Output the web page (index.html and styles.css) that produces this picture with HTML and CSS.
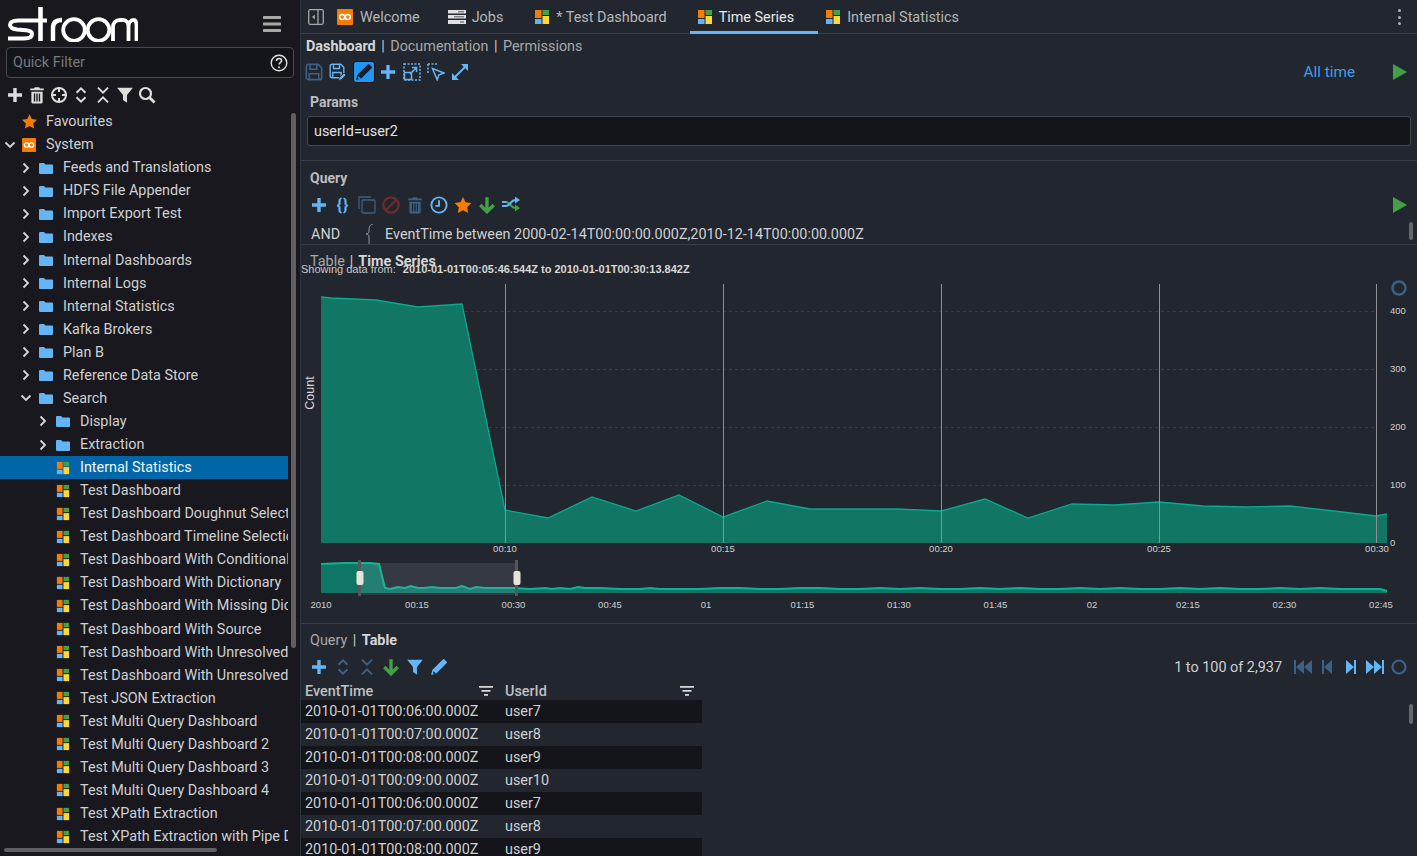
FILE: index.html
```html
<!DOCTYPE html>
<html lang="en">
<head>
<meta charset="utf-8">
<title>Stroom</title>
<link rel="stylesheet" href="styles.css">
</head>
<body>
<svg class="defs" aria-hidden="true">
  <symbol id="dash" viewBox="-1 -1 16 16">
    <rect x="0" y="0" width="6.500" height="8" fill="#f57c00"/><rect x="7.500" y="0" width="6.500" height="5" fill="#43a047"/>
    <rect x="0" y="9" width="6.500" height="5" fill="#64b5f6"/><rect x="7.500" y="6" width="6.500" height="8" fill="#fdd835"/>
  </symbol>
  <symbol id="folder" viewBox="0 0 14 14">
    <path d="M0 3a1 1 0 0 1 1-1h4l1.500 1.500H13a1 1 0 0 1 1 1V12a1 1 0 0 1-1 1H1a1 1 0 0 1-1-1z" fill="#64b5f6"/>
  </symbol>
  <symbol id="chev-r" viewBox="0 0 12 12">
    <path d="M3.500 1.500 8 6l-4.500 4.500" fill="none" stroke="#d8d8d8" stroke-width="1.800"/>
  </symbol>
  <symbol id="chev-d" viewBox="0 0 12 12">
    <path d="M1.500 3.500 6 8l4.500-4.500" fill="none" stroke="#d8d8d8" stroke-width="1.800"/>
  </symbol>
  <symbol id="oo" viewBox="0 0 16 16">
    <rect width="16" height="16" rx="1" fill="#f57c00"/>
    <circle cx="5.200" cy="8" r="2.500" fill="none" stroke="#fff" stroke-width="1.500"/><circle cx="10.800" cy="8" r="2.500" fill="none" stroke="#fff" stroke-width="1.500"/>
  </symbol>
  <symbol id="plus" viewBox="-1 -1 18 18">
    <path d="M6.300 1h3.400v5.300H15v3.400H9.700V15H6.300V9.700H1V6.300h5.300z" fill="currentColor"/>
  </symbol>
  <symbol id="trash" viewBox="0 0 16 16">
    <path d="M6 1h4l.6 1.200H14v1.600H2V2.200h3.400zM3 5h10v9.500a1 1 0 0 1-1 1H4a1 1 0 0 1-1-1zm2.200 1.600v7.200h1.200V6.600zm2.200 0v7.200h1.200V6.600zm2.200 0v7.200h1.200V6.600z" fill="currentColor" fill-rule="evenodd"/>
  </symbol>
  <symbol id="expand" viewBox="0 0 16 16">
    <path d="M4 6l4-4 4 4M4 10l4 4 4-4" fill="none" stroke="currentColor" stroke-width="1.700"/>
  </symbol>
  <symbol id="collapse" viewBox="0 0 16 16">
    <path d="M3.500 1.500 8 6l4.500-4.500M3.500 14.500 8 10l4.500 4.500" fill="none" stroke="currentColor" stroke-width="1.700"/>
  </symbol>
  <symbol id="filter" viewBox="0 0 16 16">
    <path d="M1 1.500h14L9.800 8v6.800L6.200 12.500V8z" fill="currentColor"/>
  </symbol>
  <symbol id="sortlines" viewBox="0 0 14 10">
    <path d="M0 0h14v1.700H0zM2.500 4h9v1.700h-9zM5 8h4v1.700H5z" fill="#d8d8d8"/>
  </symbol>
  <symbol id="pencil" viewBox="0 0 16 16">
    <path d="M11.400 1.300a1 1 0 0 1 1.400 0l1.900 1.900a1 1 0 0 1 0 1.400L5.300 14 1 15l1-4.300zM3.200 11.700l-.6 1.700 1 1 1.700-.6z" fill="currentColor" fill-rule="evenodd"/>
  </symbol>
  <symbol id="save" viewBox="0 0 16 16">
    <path d="M1.200 3a1.800 1.800 0 0 1 1.800-1.800h8.800l3 3V13a1.800 1.800 0 0 1-1.800 1.800H3A1.800 1.800 0 0 1 1.200 13zM4.500 1.500v4h6v-4M3.800 14.500v-5h8.400v5" fill="none" stroke="currentColor" stroke-width="1.400"/>
  </symbol>
</svg>

<div class="app">
  <aside class="sidebar">
    <header class="brand">
      <svg class="logo" viewBox="8 7 130 35" role="img" aria-label="stroom">
        <g fill="none" stroke="#fff" stroke-width="4">
          <path d="M47 20.500H18c-5 0-8 1.500-8 4.500 0 3 3 4 7 4.500l9 .8c4 .4 6 1.200 6 3.700 0 3-3 4.500-8 4.500H8" stroke-width="4"/>
          <path d="M40.500 7v34" stroke-width="4.600"/>
          <path d="M53 41V28c0-5 3-8 9-8" stroke-width="4.400"/>
          <circle cx="74" cy="30" r="10.800" stroke-width="3.800"/><circle cx="98.500" cy="30" r="10.800" stroke-width="3.800"/>
          <path d="M113 41V27c0-4 2.500-7 7-7h3c3.500 0 5.500 3 5.500 7v14M128.500 27c0-4 2-7 5-7 2 0 3 2.500 3 6v15" stroke-width="3.800"/>
        </g>
      </svg>
      <svg class="menu" viewBox="0 0 18 16" aria-hidden="true"><path d="M1 1.500h16M1 8h16M1 14.500h16" stroke="#a8a8a8" stroke-width="3" stroke-linecap="round"/></svg>
    </header>
    <div class="quick-filter">
      <span>Quick Filter</span>
      <svg viewBox="0 0 18 18" aria-hidden="true"><circle cx="9" cy="9" r="7.800" fill="none" stroke="#e0e0e0" stroke-width="1.400"/><path d="M6.500 7c0-1.500 1.100-2.500 2.600-2.500s2.500 1 2.500 2.300c0 1.800-2.500 1.900-2.500 3.700" fill="none" stroke="#e0e0e0" stroke-width="1.500"/><circle cx="9.100" cy="13.200" r="1" fill="#e0e0e0"/></svg>
    </div>
    <div class="side-tools">
      <svg class="t16"><use href="#plus"/></svg>
      <svg class="t16"><use href="#trash"/></svg>
      <svg class="t18" viewBox="0 0 18 18"><circle cx="9" cy="9" r="7" fill="none" stroke="currentColor" stroke-width="2"/><path d="M9 1v5M9 12v5M1 9h5M12 9h5" stroke="currentColor" stroke-width="2"/></svg>
      <svg class="t16"><use href="#expand"/></svg>
      <svg class="t16"><use href="#collapse"/></svg>
      <svg class="t16"><use href="#filter"/></svg>
      <svg class="t18" viewBox="0 0 18 18"><circle cx="7.500" cy="7.500" r="5.500" fill="none" stroke="currentColor" stroke-width="2.200"/><path d="M11.500 11.500 16.500 16.500" stroke="currentColor" stroke-width="2.800"/></svg>
    </div>
    <div class="tree-wrap">
      <ul class="tree">
        <li class="row l0"><i class="arrow"></i><svg class="ico star" viewBox="0.500 0.800 15 14.400"><path d="M8 .8l2.300 4.800 5.200.7-3.800 3.600.9 5.200L8 12.600l-4.600 2.500.9-5.200L.5 6.300l5.200-.7z" fill="#f57c00"/></svg><span>Favourites</span></li>
        <li class="row l0"><svg class="arrow"><use href="#chev-d"/></svg><svg class="ico"><use href="#oo"/></svg><span>System</span></li>
        <li class="row l1"><svg class="arrow"><use href="#chev-r"/></svg><svg class="ico"><use href="#folder"/></svg><span>Feeds and Translations</span></li>
        <li class="row l1"><svg class="arrow"><use href="#chev-r"/></svg><svg class="ico"><use href="#folder"/></svg><span>HDFS File Appender</span></li>
        <li class="row l1"><svg class="arrow"><use href="#chev-r"/></svg><svg class="ico"><use href="#folder"/></svg><span>Import Export Test</span></li>
        <li class="row l1"><svg class="arrow"><use href="#chev-r"/></svg><svg class="ico"><use href="#folder"/></svg><span>Indexes</span></li>
        <li class="row l1"><svg class="arrow"><use href="#chev-r"/></svg><svg class="ico"><use href="#folder"/></svg><span>Internal Dashboards</span></li>
        <li class="row l1"><svg class="arrow"><use href="#chev-r"/></svg><svg class="ico"><use href="#folder"/></svg><span>Internal Logs</span></li>
        <li class="row l1"><svg class="arrow"><use href="#chev-r"/></svg><svg class="ico"><use href="#folder"/></svg><span>Internal Statistics</span></li>
        <li class="row l1"><svg class="arrow"><use href="#chev-r"/></svg><svg class="ico"><use href="#folder"/></svg><span>Kafka Brokers</span></li>
        <li class="row l1"><svg class="arrow"><use href="#chev-r"/></svg><svg class="ico"><use href="#folder"/></svg><span>Plan B</span></li>
        <li class="row l1"><svg class="arrow"><use href="#chev-r"/></svg><svg class="ico"><use href="#folder"/></svg><span>Reference Data Store</span></li>
        <li class="row l1"><svg class="arrow"><use href="#chev-d"/></svg><svg class="ico"><use href="#folder"/></svg><span>Search</span></li>
        <li class="row l2"><svg class="arrow"><use href="#chev-r"/></svg><svg class="ico"><use href="#folder"/></svg><span>Display</span></li>
        <li class="row l2"><svg class="arrow"><use href="#chev-r"/></svg><svg class="ico"><use href="#folder"/></svg><span>Extraction</span></li>
        <li class="row l2 selected"><i class="arrow"></i><svg class="ico"><use href="#dash"/></svg><span>Internal Statistics</span></li>
        <li class="row l2"><i class="arrow"></i><svg class="ico"><use href="#dash"/></svg><span>Test Dashboard</span></li>
        <li class="row l2"><i class="arrow"></i><svg class="ico"><use href="#dash"/></svg><span>Test Dashboard Doughnut Selection</span></li>
        <li class="row l2"><i class="arrow"></i><svg class="ico"><use href="#dash"/></svg><span>Test Dashboard Timeline Selection</span></li>
        <li class="row l2"><i class="arrow"></i><svg class="ico"><use href="#dash"/></svg><span>Test Dashboard With Conditional</span></li>
        <li class="row l2"><i class="arrow"></i><svg class="ico"><use href="#dash"/></svg><span>Test Dashboard With Dictionary</span></li>
        <li class="row l2"><i class="arrow"></i><svg class="ico"><use href="#dash"/></svg><span>Test Dashboard With Missing Dictionary</span></li>
        <li class="row l2"><i class="arrow"></i><svg class="ico"><use href="#dash"/></svg><span>Test Dashboard With Source</span></li>
        <li class="row l2"><i class="arrow"></i><svg class="ico"><use href="#dash"/></svg><span>Test Dashboard With Unresolved</span></li>
        <li class="row l2"><i class="arrow"></i><svg class="ico"><use href="#dash"/></svg><span>Test Dashboard With Unresolved</span></li>
        <li class="row l2"><i class="arrow"></i><svg class="ico"><use href="#dash"/></svg><span>Test JSON Extraction</span></li>
        <li class="row l2"><i class="arrow"></i><svg class="ico"><use href="#dash"/></svg><span>Test Multi Query Dashboard</span></li>
        <li class="row l2"><i class="arrow"></i><svg class="ico"><use href="#dash"/></svg><span>Test Multi Query Dashboard 2</span></li>
        <li class="row l2"><i class="arrow"></i><svg class="ico"><use href="#dash"/></svg><span>Test Multi Query Dashboard 3</span></li>
        <li class="row l2"><i class="arrow"></i><svg class="ico"><use href="#dash"/></svg><span>Test Multi Query Dashboard 4</span></li>
        <li class="row l2"><i class="arrow"></i><svg class="ico"><use href="#dash"/></svg><span>Test XPath Extraction</span></li>
        <li class="row l2"><i class="arrow"></i><svg class="ico"><use href="#dash"/></svg><span>Test XPath Extraction with Pipe Default</span></li>
      </ul>
      <div class="vscroll"></div>
      <div class="hscroll"></div>
    </div>
  </aside>

  <main class="main">
    <nav class="tabs">
      <svg class="panel-toggle" viewBox="0 0 16 16" aria-hidden="true"><rect x=".7" y=".7" width="14.600" height="14.600" rx="1.500" fill="none" stroke="#a8a8a8" stroke-width="1.300"/><path d="M10 1v14" stroke="#a8a8a8" stroke-width="1.300"/><path d="M6.800 5.500v5L4 8z" fill="#a8a8a8"/></svg>
      <div class="tab welcome"><svg class="ico"><use href="#oo"/></svg><span>Welcome</span></div>
      <div class="tab jobs-tab"><svg class="ico jobs" viewBox="0 0 18 14"><path d="M0 0h18v3.600H0zM0 5h18v3.600H0zM0 10h18v4H0z" fill="#e0e0e0"/><path d="M10 1.800h6M6 6.800h10M12 12h4" stroke="#555" stroke-width="1"/></svg><span>Jobs</span></div>
      <div class="tab"><svg class="ico"><use href="#dash"/></svg><span>* Test Dashboard</span></div>
      <div class="tab active"><svg class="ico"><use href="#dash"/></svg><span>Time Series</span></div>
      <div class="tab"><svg class="ico"><use href="#dash"/></svg><span>Internal Statistics</span></div>
      <div class="tabs-more"><b></b><b></b><b></b></div>
    </nav>

    <section class="dash-head">
      <div class="crumbs"><b>Dashboard</b><em>|</em><span>Documentation</span><em>|</em><span>Permissions</span></div>
      <div class="tool-row">
        <svg class="t18 dim"><use href="#save"/></svg>
        <svg class="t18 blue" viewBox="0 0 18 18"><use href="#save" width="16" height="16"/><path d="M10 15l5-5 2 2-5 5-2.500.5z" fill="currentColor" stroke="#22262e" stroke-width=".8"/></svg>
        <span class="btn-on"><svg class="t16"><use href="#pencil"/></svg></span>
        <svg class="t16 blue"><use href="#plus"/></svg>
        <svg class="t18 blue" viewBox="0 0 18 18"><path d="M1 1h16v16H1z" fill="none" stroke="currentColor" stroke-width="1.600" stroke-dasharray="2 1.500"/><rect x="1.500" y="9.500" width="7" height="7" fill="#22262e" stroke="currentColor" stroke-width="1.500"/><path d="M7 11l6-6M9 4.500h4.500V9" fill="none" stroke="currentColor" stroke-width="1.500"/></svg>
        <svg class="t18 blue" viewBox="0 0 18 18"><path d="M1 1h9M1 1v9" fill="none" stroke="currentColor" stroke-width="1.600" stroke-dasharray="2 1.500"/><path d="M5.500 5.500 17 10l-5 1.800-1.800 5z" fill="none" stroke="currentColor" stroke-width="1.500"/></svg>
        <svg class="t18 blue" viewBox="0 0 18 18"><path d="M4 14 14 4" stroke="currentColor" stroke-width="2"/><path d="M10 1h7v7zM8 17H1v-7z" fill="currentColor"/></svg>
        <span class="spacer"></span>
        <span class="all-time">All time</span>
        <svg class="play" viewBox="0 0 14 16"><path d="M0 0l14 8-14 8z" fill="#43a047"/></svg>
      </div>
    </section>

    <section class="params">
      <h3>Params</h3>
      <div class="param-input">userId=user2</div>
    </section>

    <section class="query">
      <h3>Query</h3>
      <div class="tool-row q-tools">
        <svg class="t16 blue"><use href="#plus"/></svg>
        <span class="braces">{}</span>
        <svg class="t18 dim" viewBox="0 0 18 18"><path d="M1 13V1h12" fill="none" stroke="currentColor" stroke-width="1.300"/><rect x="4" y="4" width="13" height="13" rx="1" fill="none" stroke="currentColor" stroke-width="1.300"/></svg>
        <svg class="t16 red" viewBox="0 0 16 16"><circle cx="8" cy="8" r="6.800" fill="none" stroke="currentColor" stroke-width="2"/><path d="M3.500 12.500l9-9" stroke="currentColor" stroke-width="2"/></svg>
        <svg class="t16 dim"><use href="#trash"/></svg>
        <svg class="t16 blue" viewBox="0 0 16 16"><circle cx="8" cy="8" r="6.800" fill="none" stroke="currentColor" stroke-width="1.700"/><path d="M8 3.800V8.800H4.800" fill="none" stroke="currentColor" stroke-width="1.700"/></svg>
        <svg class="t18" viewBox="0 0 16 16"><path d="M8 .8l2.300 4.800 5.200.7-3.800 3.600.9 5.200L8 12.600l-4.600 2.500.9-5.200L.5 6.300l5.200-.7z" fill="#f57c00"/></svg>
        <svg class="t16" viewBox="0 0 16 16"><path d="M8 1v13M2 8l6 6 6-6" fill="none" stroke="#43a047" stroke-width="3"/></svg>
        <svg class="t18" viewBox="0 0 18 18"><path d="M4 6c4 0 5 6 9 6h1" fill="none" stroke="#43a047" stroke-width="2"/><path d="M4 10c4 0 5-6 9-6h1" fill="none" stroke="#64b5f6" stroke-width="2"/><path d="M0 6h4.500M0 10h4.500" stroke="#64b5f6" stroke-width="2"/><path d="M13 .5 18 4l-5 3.500z" fill="#64b5f6"/><path d="M13 8.500 18 12l-5 3.500z" fill="#43a047"/></svg>
        <span class="spacer"></span>
        <svg class="play" viewBox="0 0 14 16"><path d="M0 0l14 8-14 8z" fill="#43a047"/></svg>
      </div>
      <div class="expr"><span class="op">AND</span><svg class="brace" viewBox="0 0 10 20"><path d="M8 0C4 1 4 4 4 7c0 2-1 3-3 3 2 0 3 1 3 3v7" fill="none" stroke="#999" stroke-width="1"/></svg><span>EventTime between 2000-02-14T00:00:00.000Z,2010-12-14T00:00:00.000Z</span></div>
      <div class="scroll-nub q-nub"></div>
    </section>

    <section class="chart-panel">
      <div class="crumbs chart-tabs"><span>Table</span><em>|</em><b>Time Series</b></div>
      <div class="chart-caption">Showing data from: <b>2010-01-01T00:05:46.544Z to 2010-01-01T00:30:13.842Z</b></div>
      <svg class="chart" viewBox="301 245 1116 378" aria-label="Count over time">
        <g class="grid"><path d="M321 311.500H1376M321 369.500H1376M321 427.500H1376M321 485.500H1376"/></g>
        <path class="area" d="M321 297L331 298 376 300 418 307 462 304 505 510 548 518 592 497 636 511 679 495 723 517 767 501 810 509 854 509 897 509 941 511 985 499 1028 518 1072 504 1115 505 1159 502 1203 506 1246 507 1290 506 1334 511 1376 516 1387 514V543H321Z"/>
        <path class="area-line" d="M321 297L331 298 376 300 418 307 462 304 505 510 548 518 592 497 636 511 679 495 723 517 767 501 810 509 854 509 897 509 941 511 985 499 1028 518 1072 504 1115 505 1159 502 1203 506 1246 507 1290 506 1334 511 1376 516 1387 514"/>
        <path class="vlines" d="M505.500 284V543M723.500 284V543M941.500 284V543M1159.500 284V543M1376.500 284V543"/>
        <g class="tick" text-anchor="middle">
          <text x="505" y="552">00:10</text><text x="723" y="552">00:15</text><text x="941" y="552">00:20</text><text x="1159" y="552">00:25</text><text x="1377" y="552">00:30</text>
        </g>
        <g class="tick">
          <text x="1390" y="314">400</text><text x="1390" y="372">300</text><text x="1390" y="430">200</text><text x="1390" y="488">100</text><text x="1390" y="546">0</text>
        </g>
        <text class="y-title" transform="translate(314 393) rotate(-90)" text-anchor="middle">Count</text>
        <circle class="ring" cx="1399" cy="288" r="6.500"/>
        <path class="area mini" d="M321 564L345 563 370 563 379 564 385 588 390 589 398 587 405 588 411 586 418 588 424 588 432 587 440 588 448 588 456 588 462 586 470 589 476 587 485 588 500 588 514 588 530 589 545 588 552 589 560 588 570 589 578 587 585 588 600 588 620 589 640 589 650 588 660 589 680 589 700 589 720 588 740 588 760 589 780 589 800 588 820 588 840 589 860 589 880 588 900 589 920 588 940 589 960 589 980 588 1000 589 1020 588 1040 589 1060 589 1080 588 1100 589 1120 588 1140 589 1160 589 1180 588 1200 589 1220 588 1240 589 1260 589 1280 588 1300 589 1320 588 1340 589 1380 589 1387 591V593H321Z"/>
        <path class="area-line mini-line" d="M321 564L345 563 370 563 379 564 385 588 390 589 398 587 405 588 411 586 418 588 424 588 432 587 440 588 448 588 456 588 462 586 470 589 476 587 485 588 500 588 514 588 530 589 545 588 552 589 560 588 570 589 578 587 585 588 600 588 620 589 640 589 650 588 660 589 680 589 700 589 720 588 740 588 760 589 780 589 800 588 820 588 840 589 860 589 880 588 900 589 920 588 940 589 960 589 980 588 1000 589 1020 588 1040 589 1060 589 1080 588 1100 589 1120 588 1140 589 1160 589 1180 588 1200 589 1220 588 1240 589 1260 589 1280 588 1300 589 1320 588 1340 589 1380 589 1387 591"/>
        <rect class="brush" x="360" y="563" width="157" height="32"/>
        <g class="handle"><rect class="stem" x="358" y="560" width="3" height="36"/><rect class="grip" x="356.500" y="571" width="7" height="14" rx="2"/></g>
        <g class="handle"><rect class="stem" x="515" y="560" width="3" height="36"/><rect class="grip" x="513.500" y="571" width="7" height="14" rx="2"/></g>
        <g class="tick" text-anchor="middle">
          <text x="321" y="608">2010</text><text x="417" y="608">00:15</text><text x="513.500" y="608">00:30</text><text x="610" y="608">00:45</text><text x="706" y="608">01</text><text x="802.500" y="608">01:15</text><text x="899" y="608">01:30</text><text x="995.500" y="608">01:45</text><text x="1092" y="608">02</text><text x="1188" y="608">02:15</text><text x="1284.500" y="608">02:30</text><text x="1381" y="608">02:45</text>
        </g>
      </svg>
    </section>

    <section class="table-panel">
      <div class="crumbs table-tabs"><span>Query</span><em>|</em><b>Table</b></div>
      <div class="tool-row t-tools">
        <svg class="t16 blue"><use href="#plus"/></svg>
        <svg class="t16 dim"><use href="#expand"/></svg>
        <svg class="t16 dim"><use href="#collapse"/></svg>
        <svg class="t16" viewBox="0 0 16 16"><path d="M8 1v13M2 8l6 6 6-6" fill="none" stroke="#43a047" stroke-width="3"/></svg>
        <svg class="t16 blue"><use href="#filter"/></svg>
        <svg class="t16 blue"><use href="#pencil"/></svg>
        <span class="spacer"></span>
        <span class="count">1 to 100 of 2,937</span>
        <span class="pager">
          <svg class="pg dim" viewBox="0 0 18 16"><path d="M0 1h2v14H0zM10 1v14L2 8zM18 1v14l-8-7z" fill="currentColor"/></svg>
          <svg class="pg-s dim" viewBox="0 0 10 16"><path d="M0 1h2v14H0zM10 1v14L2 8z" fill="currentColor"/></svg>
          <svg class="pg-s next blue" viewBox="0 0 10 16"><path d="M8 1h2v14H8zM0 1v14l8-7z" fill="currentColor"/></svg>
          <svg class="pg blue" viewBox="0 0 18 16"><path d="M16 1h2v14h-2zM8 1v14l8-7zM0 1v14l8-7z" fill="currentColor"/></svg>
          <svg class="pg-ring dim" viewBox="0 0 16 16"><circle cx="8" cy="8" r="6.500" fill="none" stroke="currentColor" stroke-width="2.200"/></svg>
        </span>
      </div>
      <table class="grid-table">
        <colgroup><col class="c1"><col class="c2"></colgroup>
        <thead><tr><th><div class="th"><span>EventTime</span><svg class="sort"><use href="#sortlines"/></svg></div></th><th><div class="th"><span>UserId</span><svg class="sort"><use href="#sortlines"/></svg></div></th></tr></thead>
        <tbody>
          <tr><td>2010-01-01T00:06:00.000Z</td><td>user7</td></tr>
          <tr><td>2010-01-01T00:07:00.000Z</td><td>user8</td></tr>
          <tr><td>2010-01-01T00:08:00.000Z</td><td>user9</td></tr>
          <tr><td>2010-01-01T00:09:00.000Z</td><td>user10</td></tr>
          <tr><td>2010-01-01T00:06:00.000Z</td><td>user7</td></tr>
          <tr><td>2010-01-01T00:07:00.000Z</td><td>user8</td></tr>
          <tr><td>2010-01-01T00:08:00.000Z</td><td>user9</td></tr>
        </tbody>
      </table>
      <div class="scroll-nub t-nub"></div>
    </section>
  </main>
</div>
</body>
</html>
```
FILE: styles.css
```css
* { box-sizing: border-box; }
html, body { margin: 0; height: 100%; overflow: hidden; }
body { font-family: Roboto, "Liberation Sans", sans-serif; font-size: 14.400px; color: #d4d4d4; background: #22262e; }
svg { display: block; flex: none; }
.defs { position: absolute; width: 0; height: 0; }
.app { display: flex; width: 1417px; height: 856px; }

.sidebar { width: 301px; flex: none; background: #18181e; display: flex; flex-direction: column; border-right: 1px solid #2e323a; overflow: hidden; }
.brand { height: 47px; display: flex; align-items: flex-start; justify-content: space-between; padding: 7px 19px 0 8px; }
.logo { width: 130px; height: 35px; }
.menu { width: 18px; height: 16px; margin-top: 9px; }
.quick-filter { margin: 0 6px; height: 31px; border: 1px solid #4a4a50; border-radius: 4px; background: #14151a; display: flex; align-items: center; justify-content: space-between; padding: 0 5px 0 6px; color: #77797e; }
.quick-filter svg { width: 18px; height: 18px; }
.side-tools { display: flex; align-items: center; gap: 4px; padding: 0 6px; margin-top: 5px; height: 24px; margin-bottom: 3px; color: #dcdcdc; }
.t16, .t18 { width: 18px; height: 18px; }
.tree-wrap { position: relative; flex: 1; min-height: 0; }
.tree { list-style: none; margin: 0; padding: 0.150px 0 0; width: 288px; overflow: hidden; }
.row { height: 23.063px; display: flex; align-items: center; white-space: nowrap; overflow: hidden; color: #cfd0d2; }
.row.l0 { padding-left: 4px; }
.row.l1 { padding-left: 20px; }
.row.l2 { padding-left: 37px; }
.arrow { width: 12px; height: 12px; flex: none; display: block; }
.ico { width: 14px; height: 14px; margin-left: 7px; margin-right: 10px; }
.row.l0 .ico { margin-left: 6px; margin-right: 10px; }
.row.l0 .star { width: 15px; height: 15px; margin-right: 9px; }
.row.selected { background: #0066a8; color: #f2f6fa; }
.vscroll { position: absolute; right: 4px; top: 3px; width: 5px; height: 535px; background: #606064; border-radius: 3px; }
.hscroll { position: absolute; left: 4px; bottom: 4px; width: 213px; height: 4px; background: #606064; border-radius: 3px; }

.main { flex: 1; min-width: 0; display: flex; flex-direction: column; }
.tabs { height: 34px; display: flex; align-items: flex-start; border-bottom: 1px solid #3a3e46; padding-left: 7px; flex: none; }
.panel-toggle { width: 16px; height: 16px; margin: 9px 6px 0 0; }
.tab { display: flex; align-items: center; height: 34px; padding: 3px 23px 0 7px; color: #b6b7b9; white-space: nowrap; border-bottom: 3px solid transparent; }
.tab .ico { width: 16px; height: 16px; margin: 0 6px 0 0; }
.tab.welcome { padding-right: 21px; }
.tab.welcome .ico { margin-right: 7px; }
.tab.jobs-tab { padding-right: 24px; }
.tab .ico.jobs { width: 18px; height: 14px; margin-right: 6px; }
.tab.active { color: #e8e8e8; border-bottom-color: #64b5f6; padding-right: 24px; }
.tabs-more { margin-left: auto; display: flex; flex-direction: column; gap: 3.500px; padding: 9px 16px 0 0; }
.tabs-more b { width: 3px; height: 3px; border-radius: 50%; background: #b0b0b0; }

.dash-head { padding: 0 5px; height: 59px; flex: none; }
.crumbs { display: flex; align-items: center; color: #a6a8ab; }
.crumbs b { color: #d6d7d9; font-weight: 700; }
.crumbs em { font-style: normal; margin: 0 5.500px; color: #c8c8c8; }
.dash-head .crumbs { height: 24px; }
.tool-row { display: flex; align-items: center; gap: 6px; }
.dash-head .tool-row { height: 27px; margin-left: -1px; padding-right: 5px; }
.spacer { flex: 1; }
.blue { color: #64b5f6; }
.dim { color: #3b6286; }
.red { color: #6a2c30; }
.btn-on { width: 22px; height: 22px; margin-right: -2px; border-radius: 3px; background: #2196f3; color: #14202e; display: flex; align-items: center; justify-content: center; border: 1px solid #0c1118; flex: none; }
.all-time { color: #3e9fe8; font-size: 15.300px; margin-right: 32px; }
.play { width: 14px; height: 16px; }

.params { height: 68px; flex: none; border-bottom: 1px solid #3a3e46; padding: 0 6px; }
.params h3, .query h3 { margin: 0; font-size: 14px; font-weight: 700; color: #bcbdbf; line-height: 18px; padding-left: 3px; }
.param-input { margin-top: 5px; height: 30px; background: #14151a; border: 1px solid #45484e; border-radius: 3px; color: #e2e2e2; display: flex; align-items: center; padding-left: 6px; }

.query { height: 84px; flex: none; border-bottom: 1px solid #3a3e46; padding: 8px 6px 0; position: relative; overflow: hidden; }
.q-tools { height: 26px; margin-top: 5px; padding: 0 4px 0 3px; }
.braces { color: #64b5f6; font-weight: 700; font-size: 16px; width: 18px; text-align: center; letter-spacing: 1px; }
.expr { display: flex; align-items: center; height: 20px; margin-top: 6px; padding-left: 4px; color: #cfd0d2; }
.op { width: 54px; }
.brace { width: 10px; height: 20px; margin-right: 10px; }
.scroll-nub { position: absolute; width: 4px; height: 18px; border-radius: 2px; background: #66686c; }
.q-nub { right: 4px; top: 61px; }

.chart-panel { height: 379px; flex: none; position: relative; border-bottom: 1px solid #3a3e46; overflow: hidden; }
.chart-tabs { position: absolute; left: 9px; top: 8px; }
.chart-tabs em { margin: 0 5px; }
.chart-caption { position: absolute; left: 0; top: 18px; font-family: "Liberation Sans", Arial, sans-serif; font-size: 11px; color: #c8c8c8; white-space: pre; }
.chart-caption b { margin-left: 4px; color: #d8d8d8; }
.chart { width: 1116px; height: 378px; }
.grid path { stroke: #363a42; stroke-dasharray: 3 3; fill: none; }
.area { fill: #127665; }
.area.mini { fill: #0f7666; }
.area-line { fill: none; stroke: #0aa88c; stroke-width: 1.300; }
.mini-line { stroke: #0cb393; stroke-width: 2; }
.vlines { stroke: #8f9094; stroke-width: 1; fill: none; }
.tick text { font-family: "Liberation Sans", Arial, sans-serif; font-size: 9.500px; fill: #d0d0d0; }
.y-title { font-family: "Liberation Sans", Arial, sans-serif; font-size: 12.500px; fill: #d8d8d8; }
.ring { fill: none; stroke: #3b6286; stroke-width: 2.500; }
.brush { fill: #a8b0c0; opacity: .14; }
.stem { fill: #55565a; }
.grip { fill: #e8e4dc; }

.table-panel { flex: 1; min-height: 0; position: relative; overflow: hidden; }
.table-tabs { padding: 8px 0 0 9px; height: 29px; align-items: flex-start; }
.t-tools { height: 27px; padding: 0 10px 0 9px; }
.count { color: #d0d0d0; margin-right: 6px; padding-top: 1px; }
.pager { display: flex; align-items: center; gap: 10px; }
.pg { width: 18px; height: 16px; }
.pg-s { width: 10px; height: 16px; }
.pg-s.next { margin-left: 4px; }
.pg-ring { width: 16px; height: 16px; margin-left: -3px; }
.grid-table { border-collapse: collapse; table-layout: fixed; width: 401px; }
.c1 { width: 200px; }
.c2 { width: 201px; }
.grid-table th { padding: 2px 4px 0; font-weight: 500; text-align: left; color: #bfc0c2; height: 20px; }
.th { display: flex; align-items: center; justify-content: space-between; padding-right: 4px; }
.sort { width: 14px; height: 10px; }
.grid-table td { height: 23px; padding: 0 4px 1px; color: #d0d1d3; white-space: nowrap; background: #14151a; }
.grid-table tbody tr:nth-child(even) td { background: #22262e; }
.t-nub { right: 4px; top: 80px; height: 20px; }
```
